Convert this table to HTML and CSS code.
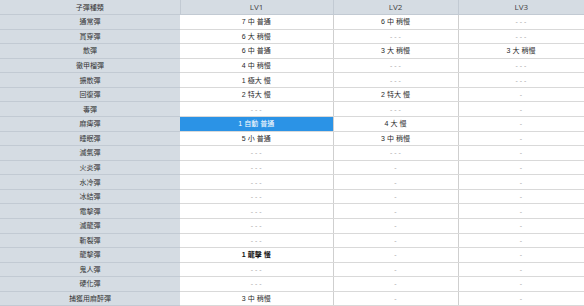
FILE: index.html
```html
<!DOCTYPE html>
<html lang="zh-Hant">
<head>
<meta charset="utf-8">
<title>子彈種類</title>
<link rel="stylesheet" href="styles.css">
</head>
<body>
<table class="ammo">
  <colgroup>
    <col class="c-name"><col class="c-lv1"><col class="c-lv2"><col class="c-lv3">
  </colgroup>
  <thead>
    <tr><th>子彈種類</th><th class="lv">LV1</th><th class="lv">LV2</th><th class="lv">LV3</th></tr>
  </thead>
  <tbody>
    <tr><th>通常彈</th><td>7 中 普通</td><td>6 中 稍慢</td><td class="na">- - -</td></tr>
    <tr><th>貫穿彈</th><td>6 大 稍慢</td><td class="na">- - -</td><td class="na">- - -</td></tr>
    <tr><th>散彈</th><td>6 中 普通</td><td>3 大 稍慢</td><td>3 大 稍慢</td></tr>
    <tr><th>徹甲榴彈</th><td>4 中 稍慢</td><td class="na">- - -</td><td class="na">- - -</td></tr>
    <tr><th>擴散彈</th><td>1 極大 慢</td><td class="na">- - -</td><td class="na">- - -</td></tr>
    <tr><th>回復彈</th><td>2 特大 慢</td><td>2 特大 慢</td><td class="na">-</td></tr>
    <tr><th>毒彈</th><td class="na">- - -</td><td class="na">- - -</td><td class="na">-</td></tr>
    <tr><th>麻痺彈</th><td class="sel">1 自動 普通</td><td>4 大 慢</td><td class="na">-</td></tr>
    <tr><th>睡眠彈</th><td>5 小 普通</td><td>3 中 稍慢</td><td class="na">-</td></tr>
    <tr><th>滅氣彈</th><td class="na">- - -</td><td class="na">- - -</td><td class="na">-</td></tr>
    <tr><th>火炎彈</th><td class="na">- - -</td><td class="na">-</td><td class="na">-</td></tr>
    <tr><th>水冷彈</th><td class="na">- - -</td><td class="na">-</td><td class="na">-</td></tr>
    <tr><th>冰結彈</th><td class="na">- - -</td><td class="na">-</td><td class="na">-</td></tr>
    <tr><th>電擊彈</th><td class="na">- - -</td><td class="na">-</td><td class="na">-</td></tr>
    <tr><th>滅龍彈</th><td class="na">- - -</td><td class="na">-</td><td class="na">-</td></tr>
    <tr><th>斬裂彈</th><td class="na">- - -</td><td class="na">-</td><td class="na">-</td></tr>
    <tr><th>龍擊彈</th><td class="strong">1 龍擊 慢</td><td class="na">-</td><td class="na">-</td></tr>
    <tr><th>鬼人彈</th><td class="na">- - -</td><td class="na">-</td><td class="na">-</td></tr>
    <tr><th>硬化彈</th><td class="na">- - -</td><td class="na">-</td><td class="na">-</td></tr>
    <tr><th>捕獲用麻醉彈</th><td>3 中 稍慢</td><td class="na">-</td><td class="na">-</td></tr>
  </tbody>
</table>
</body>
</html>
```
FILE: styles.css
```css
html, body {
  margin: 0;
  padding: 0;
  background: #ffffff;
}
.ammo {
  width: 584px;
  height: 306px;
  border-collapse: collapse;
  table-layout: fixed;
  font-family: "Liberation Sans", "Noto Sans CJK TC", sans-serif;
  font-size: 7px;
  color: #2a2a2a;
}
.c-name { width: 180px; }
.c-lv1 { width: 153px; }
.c-lv2 { width: 125px; }
.c-lv3 { width: 126px; }
.ammo tr { height: 14.57px; }
.ammo th, .ammo td {
  padding: 0;
  text-align: center;
  vertical-align: middle;
  line-height: 1;
  white-space: nowrap;
}
.ammo th {
  font-weight: normal;
  background: #d5dce3;
  border-bottom: 1px solid #c2cad3;
  color: #333;
}
.ammo thead th {
  border-left: 1px solid #c2cad3;
  border-bottom: 1px solid #c2cad3;
}
.ammo thead th:first-child { border-left: none; }
.ammo thead th.lv {
  font-family: "Open Sans", "Liberation Sans", sans-serif;
  font-size: 8px;
  color: #444;
}
.ammo td {
  background: #ffffff;
  border-bottom: 1px solid #d9d9d9;
  border-left: 1px solid #cfcfcf;
}
.ammo td:nth-child(2) { border-left: none; }
.ammo td:last-child { border-right: 1px solid #d0d0d0; }
.ammo td.na {
  color: #a9a9a9;
}
.ammo td.sel {
  background: #2b93e6;
  color: #ffffff;
}
.ammo td.strong {
  font-weight: bold;
  color: #111;
}
```
